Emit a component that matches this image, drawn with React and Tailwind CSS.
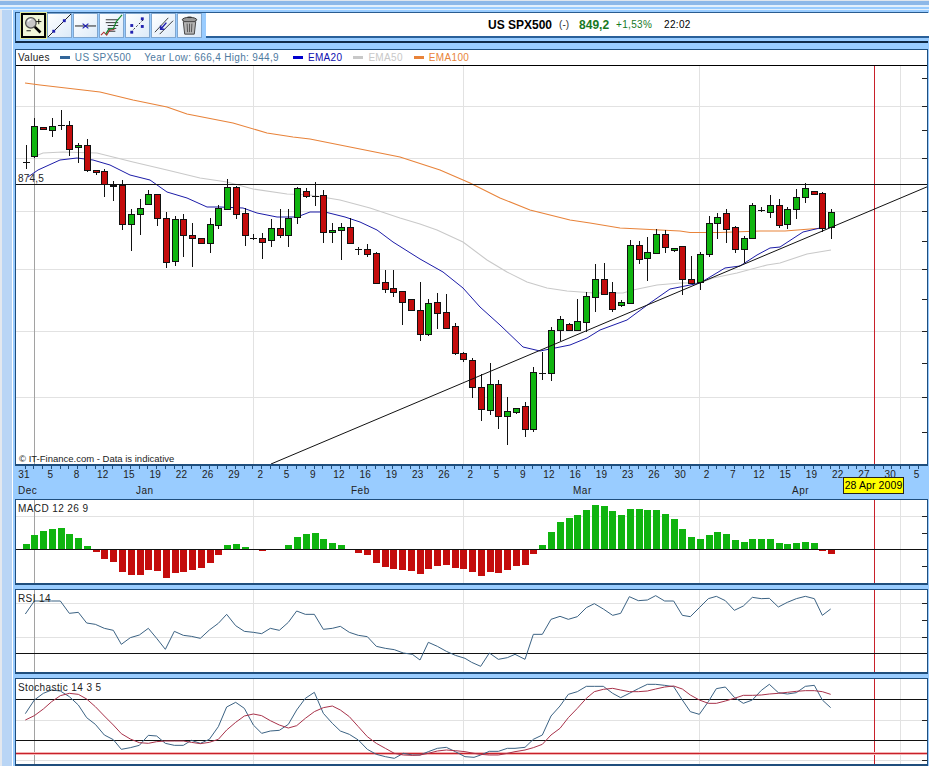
import React from 'react';

const STEP = 8.755;
const RED_X = 874.5;
const VERTICALS = [253, 463, 699, 900];

// body top, body bottom, wick top, wick bottom, type
const CANDLES = [
  [162, 163, 145, 169, 'd'], [126, 156, 118, 158, 'g'], [127, 129, 127, 129, 'r'], [126, 130, 118, 137, 'g'],
  [125, 125, 110, 130, 'd'], [125, 149, 121, 156, 'r'], [145, 147, 143, 163, 'g'], [145, 170, 139, 172, 'r'],
  [170, 172, 170, 175, 'r'], [171, 184, 169, 197, 'r'], [185, 186, 181, 201, 'r'], [185, 224, 180, 230, 'r'],
  [214, 224, 209, 251, 'g'], [208, 214, 199, 235, 'g'], [194, 204, 190, 205, 'g'], [194, 218, 194, 226, 'r'],
  [218, 262, 212, 268, 'r'], [219, 261, 216, 266, 'g'], [219, 235, 214, 257, 'r'], [235, 238, 223, 267, 'r'],
  [238, 243, 238, 244, 'r'], [224, 243, 218, 253, 'g'], [208, 225, 205, 229, 'g'], [187, 209, 179, 210, 'g'],
  [187, 214, 186, 219, 'r'], [213, 235, 208, 246, 'r'], [238, 238, 234, 240, 'd'], [238, 242, 233, 259, 'r'],
  [228, 240, 219, 247, 'g'], [228, 235, 209, 238, 'r'], [218, 235, 209, 247, 'g'], [188, 217, 187, 224, 'g'],
  [191, 196, 188, 198, 'r'], [196, 196, 182, 206, 'd'], [195, 232, 190, 243, 'r'], [230, 232, 223, 243, 'g'],
  [227, 230, 223, 260, 'g'], [227, 243, 218, 243, 'r'], [249, 249, 247, 255, 'd'], [249, 254, 244, 257, 'r'],
  [253, 283, 252, 284, 'r'], [282, 289, 270, 293, 'r'], [288, 292, 270, 297, 'r'], [291, 302, 291, 325, 'r'],
  [299, 310, 299, 310, 'r'], [310, 334, 282, 341, 'r'], [303, 334, 299, 336, 'g'], [302, 313, 293, 329, 'r'],
  [312, 328, 294, 329, 'r'], [326, 353, 323, 355, 'r'], [353, 359, 352, 362, 'r'], [360, 387, 358, 398, 'r'],
  [387, 409, 374, 421, 'r'], [384, 410, 363, 415, 'g'], [384, 416, 380, 429, 'r'], [411, 416, 397, 445, 'g'],
  [408, 412, 408, 414, 'g'], [406, 429, 402, 437, 'r'], [372, 429, 367, 432, 'g'], [373, 373, 352, 380, 'd'],
  [330, 373, 327, 381, 'g'], [319, 330, 316, 341, 'g'], [324, 330, 323, 331, 'r'], [321, 330, 299, 330, 'g'],
  [296, 322, 292, 332, 'g'], [279, 297, 264, 312, 'g'], [279, 294, 263, 295, 'r'], [292, 309, 282, 312, 'r'],
  [302, 305, 300, 307, 'g'], [245, 303, 240, 304, 'g'], [245, 259, 241, 264, 'r'], [252, 258, 237, 281, 'g'],
  [234, 253, 229, 253, 'g'], [234, 247, 230, 253, 'r'], [248, 250, 248, 252, 'g'], [246, 279, 246, 295, 'r'],
  [279, 283, 256, 284, 'r'], [254, 282, 252, 290, 'g'], [223, 254, 216, 257, 'g'], [217, 223, 213, 239, 'g'],
  [213, 229, 209, 243, 'r'], [227, 249, 226, 253, 'r'], [238, 249, 236, 263, 'g'], [205, 238, 203, 239, 'g'],
  [210, 210, 207, 212, 'd'], [205, 212, 195, 218, 'g'], [205, 225, 199, 228, 'r'], [209, 224, 207, 229, 'g'],
  [197, 209, 189, 219, 'g'], [188, 197, 183, 203, 'g'], [191, 194, 191, 195, 'r'], [193, 228, 192, 232, 'r'],
  [212, 227, 209, 239, 'g'],
];

const MACD = [
  5, 14, 18, 20, 21, 15, 11, 3, -3, -10, -13, -23, -26, -26, -21, -22, -29, -24, -23, -21, -19, -14, -6, 4, 5, 2, 0, -2, 0, 0,
  4, 12, 15, 16, 10, 6, 4, 0, -4, -6, -14, -18, -20, -21, -22, -25, -20, -17, -16, -19, -20, -23, -27, -23, -24, -21, -17, -16, -5,
  4, 17, 27, 31, 34, 39, 44, 43, 38, 34, 40, 40, 39, 39, 35, 30, 20, 12, 10, 14, 17, 15, 9, 7, 10, 10, 10, 6, 5, 6, 7, 6, -2, -5,
];

const EMA100 = '25,83 40,85 83,90 100,92 133,100 167,107 187,114 233,123 267,133 293,137 310,139 350,147 400,157 440,170 470,183 500,198 530,210 570,220 590,223 620,228 650,229.5 680,231 690,232.5 720,232.5 760,231 785,231 810,229 825,228';
const EMA50 = '33,157 43,153 63,152 97,153 133,162 167,170 200,178 227,182 253,189 287,194 310,195 340,200 370,208 400,218 420,224 437,230 463,242 487,260 507,272 527,282 547,288 567,291 594,293 623,293 633,290 657,285 680,283 700,283 713,278 737,273 767,265 780,263 807,254 831,250';
const EMA20 = '28,177 38,170 60,160 77,158 93,160 110,165 130,175 150,180 167,192 187,198 207,207 220,207 243,208 257,213 277,217 297,217 310,212 325,212 345,217 360,222 377,230 393,242 420,259 443,272 463,288 480,307 500,325 523,347 540,351 560,347 570,345 587,338 600,330 627,320 650,303 670,289 700,283 725,268 740,266 757,255 770,248 780,247 803,232 820,228';

// traced in 3x crops, so every series is [x, y] pairs at 3x with its crop offset
const scale = (arr, ox, oy) => {
  const out = [];
  for (let i = 0; i < arr.length; i += 2) out.push(`${ox + arr[i] / 3},${oy + arr[i + 1] / 3}`);
  return out.join(' ');
};

const RSI = `${scale([76, 87, 103, 48, 130, 48, 155, 48, 181, 48, 208, 85, 235, 82, 260, 114, 286, 118, 313, 130, 340, 136, 364, 178, 391, 158, 418, 150, 445, 130, 470, 160, 496, 193, 523, 139, 550, 151, 574, 154, 601, 160, 628, 135, 655, 115, 680, 88, 707, 122, 733, 139, 760, 142, 785, 146, 811, 130, 838, 136, 865, 112, 890, 78, 916, 88, 943, 88, 970, 133, 997, 130, 1021, 124, 1048, 142, 1075, 151, 1102, 155, 1129, 184, 1156, 190, 1183, 194, 1210, 204, 1237, 208, 1260, 225, 1285, 172, 1312, 184, 1339, 199, 1366, 211], 0, 585)} ${scale([0, 220, 20, 232, 47, 244, 73, 204, 100, 223, 127, 218, 150, 208, 180, 223, 205, 148, 232, 148, 258, 103, 285, 94, 310, 103, 337, 95, 364, 68, 388, 56, 415, 72, 443, 91, 467, 85, 493, 35, 520, 47, 547, 45, 572, 32, 599, 48, 626, 48, 652, 91, 676, 95, 703, 68, 730, 41, 754, 34, 781, 47, 808, 76, 835, 63, 862, 37, 889, 41, 913, 40, 940, 66, 967, 52, 994, 41, 1021, 34, 1048, 41, 1072, 91, 1097, 72], 465, 585)}`;

const STOCH_K = `${scale([76, 386, 103, 345, 130, 325, 155, 315, 181, 318, 208, 335, 235, 360, 260, 398, 286, 418, 313, 450, 340, 464, 364, 493, 391, 488, 418, 481, 445, 451, 470, 453, 496, 475, 523, 481, 550, 481, 574, 466, 601, 475, 628, 463, 655, 425, 680, 366, 707, 352, 733, 370, 760, 420, 785, 445, 811, 438, 838, 436, 865, 418, 890, 375, 916, 340, 943, 322, 970, 385, 997, 415, 1021, 438, 1048, 448, 1075, 465, 1102, 493, 1129, 508, 1156, 515, 1183, 520, 1210, 505, 1237, 510, 1260, 510, 1285, 500, 1312, 490, 1339, 487, 1366, 500], 0, 585)} ${scale([0, 515, 27, 517, 47, 510, 73, 499, 100, 499, 127, 490, 150, 490, 180, 487, 205, 463, 232, 450, 258, 393, 285, 363, 310, 328, 337, 320, 364, 304, 388, 304, 415, 304, 443, 325, 467, 338, 493, 325, 520, 311, 547, 298, 572, 298, 599, 301, 626, 305, 652, 345, 676, 380, 703, 388, 730, 350, 754, 311, 781, 306, 808, 337, 835, 355, 862, 345, 889, 316, 913, 298, 940, 323, 967, 327, 994, 323, 1021, 304, 1048, 301, 1072, 345, 1097, 368], 465, 585)}`;

const STOCH_D = `${scale([76, 405, 103, 392, 130, 372, 155, 350, 181, 332, 208, 325, 235, 328, 260, 342, 286, 365, 313, 393, 340, 420, 364, 446, 391, 462, 418, 473, 445, 475, 470, 470, 496, 468, 523, 468, 550, 468, 574, 472, 601, 476, 628, 472, 655, 463, 680, 435, 707, 412, 733, 393, 760, 387, 785, 392, 811, 407, 838, 420, 865, 429, 890, 422, 916, 400, 943, 380, 970, 368, 997, 363, 1021, 375, 1048, 395, 1075, 425, 1102, 455, 1129, 475, 1156, 490, 1183, 505, 1210, 510, 1237, 511, 1260, 510, 1285, 505, 1312, 498, 1339, 495, 1366, 497], 0, 585)} ${scale([0, 500, 27, 505, 47, 508, 73, 510, 100, 510, 127, 505, 150, 500, 180, 495, 205, 488, 232, 478, 258, 450, 285, 430, 310, 398, 337, 370, 364, 340, 388, 320, 415, 313, 443, 310, 467, 315, 493, 320, 520, 320, 547, 318, 572, 312, 599, 306, 626, 303, 652, 312, 676, 330, 703, 345, 730, 355, 754, 355, 781, 348, 808, 340, 835, 331, 862, 331, 889, 330, 913, 327, 940, 325, 967, 322, 994, 319, 1021, 317, 1048, 317, 1072, 320, 1097, 328], 465, 585)}`;

const DATES = ['31', '5', '8', '12', '15', '19', '22', '26', '29', '2', '5', '9', '12', '16', '19', '23', '26', '2', '5', '9', '12', '16', '19', '23', '26', '30', '2', '7', '12', '15', '19', '22', '27', '30', '5'];
const MONTHS = [['Dec', 'w-[118px]'], ['Jan', 'w-[215px]'], ['Feb', 'w-[222px]'], ['Mar', 'w-[219px]'], ['Apr', 'w-[60px]']];

const candleX = (i) => Math.round(25.7 + STEP * i);

function Grid({ y0, y1, rows, ticks }) {
  return (
    <g shapeRendering="crispEdges">
      {rows.map((y) => <line key={y} x1="16" x2="927" y1={y + 0.5} y2={y + 0.5} stroke="#e2e2e2" />)}
      {VERTICALS.map((x) => <line key={x} x1={x + 0.5} x2={x + 0.5} y1={y0} y2={y1} stroke="#e2e2e2" />)}
      <line x1="34.5" x2="34.5" y1={y0} y2={y1} stroke="#a2a2a2" />
      <line x1={RED_X} x2={RED_X} y1={y0} y2={y1} stroke="#c8202a" />
      {ticks.map((y) => <line key={y} x1="922" x2="927" y1={y + 0.5} y2={y + 0.5} stroke="#222" />)}
    </g>
  );
}

function Candle({ candle, index }) {
  const [top, bottom, wickTop, wickBottom, type] = candle;
  const x = candleX(index);
  return (
    <g shapeRendering="crispEdges">
      <line x1={x + 0.5} x2={x + 0.5} y1={wickTop} y2={wickBottom} stroke="#111" />
      {type === 'd' ? (
        <line x1={x - 3} x2={x + 4} y1={top + 0.5} y2={top + 0.5} stroke="#111" />
      ) : (
        <rect x={x - 2.5} y={top + 0.5} width="6" height={bottom - top} fill={type === 'g' ? '#0fb40f' : '#c40c0c'} stroke="#111" />
      )}
    </g>
  );
}

function PriceChart() {
  return (
    <svg className="block" width="911" height="398" viewBox="16 66 911 398">
      <Grid y0={66} y1={464} rows={[106, 158, 211, 269, 331, 397]} ticks={[78, 106, 130, 158, 184, 211, 241, 269, 299, 331, 363, 397, 432]} />
      <polyline points={EMA100} fill="none" stroke="#e8833a" strokeWidth="1.1" />
      <polyline points={EMA50} fill="none" stroke="#c9c9c9" strokeWidth="1.1" />
      <polyline points={EMA20} fill="none" stroke="#1c1ca8" strokeWidth="1" />
      {CANDLES.map((c, i) => <Candle key={i} candle={c} index={i} />)}
      <line x1="16" x2="927" y1="184.5" y2="184.5" stroke="#111" shapeRendering="crispEdges" />
      <line x1="271" y1="464" x2="929" y2="186" stroke="#111" strokeWidth="1" />
      <text x="18" y="182" fontSize="10" fill="#222" letterSpacing="0.2">874,5</text>
    </svg>
  );
}

function MacdChart() {
  return (
    <svg className="block" width="911" height="83" viewBox="16 500 911 83">
      <Grid y0={500} y1={583} rows={[516]} ticks={[516, 533, 566]} />
      {MACD.map((v, i) => (v === 0 ? null : (
        <rect
          key={i}
          shapeRendering="crispEdges"
          x={candleX(i) - 3}
          y={v > 0 ? 549 - v : 549}
          width="7"
          height={Math.abs(v)}
          fill={v > 0 ? '#0fb40f' : '#c40c0c'}
        />
      )))}
      <line x1="16" x2="927" y1="549.5" y2="549.5" stroke="#111" shapeRendering="crispEdges" />
    </svg>
  );
}

function RsiChart() {
  return (
    <svg className="block" width="911" height="82" viewBox="16 590 911 82">
      <Grid y0={590} y1={672} rows={[603, 637]} ticks={[603, 620, 637]} />
      <line x1="16" x2="927" y1="653.5" y2="653.5" stroke="#111" shapeRendering="crispEdges" />
      <polyline points={RSI} fill="none" stroke="#3b6283" strokeWidth="1" />
    </svg>
  );
}

function StochChart() {
  return (
    <svg className="block" width="911" height="85" viewBox="16 679 911 85">
      <Grid y0={679} y1={764} rows={[720, 760]} ticks={[699, 720, 740, 760]} />
      <line x1="16" x2="927" y1="699.5" y2="699.5" stroke="#111" shapeRendering="crispEdges" />
      <line x1="16" x2="927" y1="740.5" y2="740.5" stroke="#111" shapeRendering="crispEdges" />
      <line x1="16" x2="927" y1="753.5" y2="753.5" stroke="#f3b5b5" strokeWidth="3" shapeRendering="crispEdges" />
      <line x1="16" x2="927" y1="753.5" y2="753.5" stroke="#c8202a" shapeRendering="crispEdges" />
      <polyline points={STOCH_K} fill="none" stroke="#3b6283" strokeWidth="1" />
      <polyline points={STOCH_D} fill="none" stroke="#a8324a" strokeWidth="1" />
    </svg>
  );
}

function ToolButton({ active, children }) {
  return (
    <div className={active
      ? 'w-[25px] h-[25px] border-2 border-black outline outline-1 outline-[#dfe89a] bg-[#f1f6d8]'
      : 'w-[25px] h-[25px] border border-[#7fa6cf] bg-gradient-to-br from-white to-[#dceaf8]'}>
      <svg className="block w-full h-full" viewBox="0 0 24 24">{children}</svg>
    </div>
  );
}

function Square({ x, y }) {
  return <rect x={x - 1.5} y={y - 1.5} width="3" height="3" fill="#2020b0" />;
}

function Toolbar() {
  return (
    <div className="flex gap-px">
      <ToolButton active>
        <circle cx="9" cy="9" r="6" fill="#c8c8c8" stroke="#555" strokeWidth="1.5" />
        <path d="M5.5 7.5a4 4 0 0 1 4-2.5" fill="none" stroke="#fff" strokeWidth="1.5" />
        <path d="M13.5 13.5L20 20" stroke="#000" strokeWidth="3" />
        <path d="M15 7.5h6M18 4.5v6" stroke="#000" strokeWidth="1" />
        <path d="M4 18h5" stroke="#000" strokeWidth="1" />
      </ToolButton>
      <ToolButton>
        <path d="M0 24L24 0" stroke="#000" strokeWidth="0.9" />
        <Square x={6} y={18} />
        <Square x={17} y={7} />
      </ToolButton>
      <ToolButton>
        <path d="M1 12.5h22" stroke="#000" strokeWidth="0.9" />
        <path d="M9 10l3 2.5-3 2.5M15 10l-3 2.5 3 2.5" fill="none" stroke="#2020b0" strokeWidth="1.2" />
      </ToolButton>
      <ToolButton>
        <path d="M6 6h13M6 9h13M8 12h11M8 15h9M8 18h8" stroke="#333" strokeWidth="1" />
        <path d="M1 22l3-3 3 3 3-5 5-1" fill="none" stroke="#b03030" strokeWidth="1.2" />
        <path d="M6 21l3-5 5-1 3-7 6-7" fill="none" stroke="#138a2e" strokeWidth="1.2" />
      </ToolButton>
      <ToolButton>
        <path d="M5 19L19 5" stroke="#222" strokeWidth="1" strokeDasharray="2 2" />
        <Square x={6} y={12} />
        <Square x={17} y={5} />
        <Square x={6} y={19} />
        <Square x={17} y={13} />
      </ToolButton>
      <ToolButton>
        <path d="M3 19L17 4M8 21L22 7" stroke="#222" strokeWidth="0.9" />
        <path d="M15 9l-6 7M9 12v4h4" fill="none" stroke="#2020b0" strokeWidth="1.6" />
      </ToolButton>
      <ToolButton>
        <ellipse cx="12" cy="6" rx="7.5" ry="2.5" fill="#9a9a9a" stroke="#333" strokeWidth="1" />
        <path d="M10 3.5h4" stroke="#333" strokeWidth="1.5" />
        <path d="M5.5 8l1.5 13h10l1.5-13z" fill="#b4b4b4" stroke="#444" strokeWidth="1" />
        <path d="M9.5 10l.5 9M12 10v9M14.5 10l-.5 9" stroke="#555" strokeWidth="1" />
      </ToolButton>
    </div>
  );
}

function Legend({ swatch, color, children }) {
  return (
    <div className="flex items-center gap-[5px]">
      <span className={`w-[10px] h-[3px] ${swatch}`} />
      <span className={color}>{children}</span>
    </div>
  );
}

function Panel({ label, children }) {
  return (
    <div className="relative border border-b-2 border-[#1f4e7d] bg-white">
      <span className="absolute left-[2px] top-[4px] text-[10px] leading-none tracking-[0.4px] text-[#222]">{label}</span>
      {children}
    </div>
  );
}

export default function App() {
  return (
    <div className="w-[929px] h-[766px] overflow-hidden bg-[#99ccff] font-['Liberation_Sans',Arial,sans-serif]">
      {/* window chrome stripes */}
      <div className="h-px bg-[#dfe6ee]" />
      <div className="h-[4px] bg-[#8db8e8]" />
      <div className="h-[2px] bg-[#e3f0fc]" />
      <div className="h-[2px] bg-[#99ccff]" />
      <div className="h-px bg-[#e3f0fc]" />
      <div className="flex h-[756px]">
        <div className="w-[13px] h-full flex shrink-0">
          <div className="w-[2px] bg-[#e4e8ee]" />
          <div className="w-[10px] bg-[#b9d5f5]" />
          <div className="w-px bg-white" />
        </div>
        <div className="w-[2px] shrink-0" />
        <div className="w-[913px] shrink-0">
          <div className="h-[3px]" />
          {/* toolbar and title */}
          <div className="flex h-[28px] pl-[5px] border-l border-[#1f4e7d] border-t border-b-2 border-t-[#2a5c90] border-b-[#0f2a48] box-content -mt-px">
            <Toolbar />
            <div className="ml-[4px] mr-[-2px] flex-1 h-[25px] flex items-center pl-[282px] bg-white border-b-2 border-[#2a6099]">
              <span className="text-[12px] font-bold text-black">US SPX500</span>
              <span className="ml-[7px] text-[10px] text-[#333]">(-)</span>
              <span className="ml-[10px] text-[12px] font-bold text-[#17791f]">849,2</span>
              <span className="ml-[7px] text-[10px] tracking-[0.3px] text-[#17791f]">+1,53%</span>
              <span className="ml-[12px] text-[10px] tracking-[0.3px] text-black">22:02</span>
            </div>
          </div>
          <div className="h-[6px]" />

          {/* main chart */}
          <div className="relative border border-b-2 border-[#1f4e7d] bg-white">
            <div className="flex items-center gap-[11px] h-[16px] pl-[2px] border-b border-black text-[10px] leading-none tracking-[0.33px]">
              <span className="text-[#222] mr-[-1px]">Values</span>
              <Legend swatch="bg-[#336699]" color="text-[#4f7a9f]">US SPX500</Legend>
              <span className="text-[#4f7a9f] ml-[2px] mr-[3px]">Year Low: 666,4 High: 944,9</span>
              <Legend swatch="bg-[#0000cc]" color="text-[#1010b0]">EMA20</Legend>
              <Legend swatch="bg-[#c8c8c8]" color="text-[#c8c8c8]">EMA50</Legend>
              <Legend swatch="bg-[#e8833a]" color="text-[#e8833a]">EMA100</Legend>
            </div>
            <PriceChart />
            <span className="absolute left-[3px] bottom-[1px] text-[9.5px] leading-none text-[#222]">© IT-Finance.com - Data is indicative</span>
          </div>

          {/* date axis */}
          <div className="relative h-[33px]">
            <svg className="block" width="911" height="3" viewBox="16 466 911 3">
              {CANDLES.concat(CANDLES.slice(0, 10)).map((_, i) => (
                <line key={i} x1={candleX(i) + 0.5} x2={candleX(i) + 0.5} y1="466" y2="469" stroke="#1f4e7d" shapeRendering="crispEdges" />
              ))}
            </svg>
            <div className="flex ml-[-4px] text-[10px] leading-[12px] tracking-[0.4px] text-[#222]">
              {DATES.map((d, i) => <span key={i} className="w-[26.26px] shrink-0 text-center">{d}</span>)}
            </div>
            <div className="flex ml-[3px] mt-[4px] text-[10px] leading-[12px] tracking-[0.5px] text-[#222]">
              {MONTHS.map(([m, w]) => <span key={m} className={`${w} shrink-0`}>{m}</span>)}
            </div>
            <span className="absolute left-[828px] top-[11px] w-[61px] h-[17px] flex items-center justify-center bg-[#ffff00] border border-[#222] text-[10.5px] tracking-[0.1px] text-black whitespace-nowrap">28 Apr 2009</span>
          </div>

          <Panel label="MACD 12 26 9"><MacdChart /></Panel>
          <div className="h-[4px]" />
          <Panel label="RSI 14"><RsiChart /></Panel>
          <div className="h-[4px]" />
          <Panel label="Stochastic 14 3 5"><StochChart /></Panel>
        </div>
      </div>
    </div>
  );
}
